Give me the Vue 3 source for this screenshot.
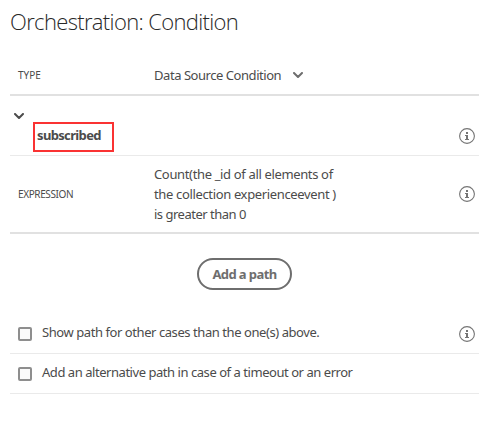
<script setup>
import { h } from 'vue'

const InfoIcon = () =>
  h('svg', { width: 16, height: 16, viewBox: '0 0 16 16', role: 'img', 'aria-label': 'Info' }, [
    h('circle', { cx: 8, cy: 8, r: 7.4, fill: 'none', stroke: '#747474', 'stroke-width': 1.1 }),
    h('path', { d: 'M7 4h2v2H7zM6 7h3v4h1v1H6v-1h1V8H6z', fill: '#747474' })
  ])

const Chevron = () =>
  h('svg', { width: 10, height: 6, viewBox: '0 0 10 6' }, [
    h('path', { d: 'M1 1l4 4 4-4', fill: 'none', stroke: 'currentColor', 'stroke-width': 2, 'stroke-linecap': 'round', 'stroke-linejoin': 'round' })
  ])

const options = [
  { label: 'Show path for other cases than the one(s) above.', info: true, cls: 'show' },
  { label: 'Add an alternative path in case of a timeout or an error', info: false, cls: 'alternative' }
]
</script>

<template>
  <main class="panel">
    <h1>Orchestration: Condition</h1>
    <section class="type">
      <span class="label type-label">TYPE</span>
      <span class="source">Data Source Condition</span>
      <Chevron class="select-arrow" />
    </section>
    <section class="path">
      <Chevron class="toggle" />
      <div class="path-row">
        <div class="name">subscribed</div>
        <InfoIcon />
      </div>
    </section>
    <section class="expression">
      <span class="label">EXPRESSION</span>
      <div class="value">
        <div>Count(the _id of all elements of</div>
        <div>the collection experienceevent )</div>
        <div class="last-line">is greater than 0</div>
      </div>
      <InfoIcon />
    </section>
    <div class="actions"><button>Add a path</button></div>
    <label v-for="o in options" :key="o.cls" class="option" :class="o.cls">
      <input type="checkbox" />
      <span class="option-text">{{ o.label }}</span>
      <InfoIcon v-if="o.info" />
    </label>
  </main>
</template>

<style>
body { background: #fff; }
</style>

<style scoped>
* { box-sizing: border-box; }
.panel {
  width: 479px;
  height: 447px;
  padding-left: 10px;
  color: #4b4b4b;
  font-family: "Noto Sans", "Open Sans", sans-serif;
  font-size: 13px;
  line-height: 20px;
  white-space: nowrap;
}
svg { display: block; flex: none; }
h1 {
  height: 56px;
  margin: 0;
  padding-top: 6px;
  color: #282828;
  font-family: "Open Sans", "Noto Sans", sans-serif;
  font-size: 22px;
  font-weight: 300;
  line-height: 30px;
  letter-spacing: -0.65px;
}
.type {
  display: flex;
  align-items: center;
  height: 40px;
  padding-left: 8px;
  border-bottom: 2px solid #e1e1e1;
}
.label { width: 136px; font-size: 10px; letter-spacing: -0.38px; }
.type-label { letter-spacing: 0; }
.source { width: 139px; letter-spacing: -0.45px; }
.select-arrow { color: #6e6e6e; }
.path { height: 60px; padding-top: 17px; border-bottom: 1px solid #eaeaea; }
.toggle { margin-left: 4px; color: #4b4b4b; }
.path-row { display: flex; justify-content: space-between; padding-right: 4px; margin-top: 3px; }
.path-row svg { margin-top: 6px; }
.name {
  width: 81px;
  height: 30px;
  margin-left: 23px;
  padding: 1px 0 0 2px;
  border: 2px solid #fa3232;
  font-weight: 700;
  letter-spacing: -0.65px;
}
.expression {
  display: flex;
  align-items: center;
  height: 78px;
  padding: 0 4px 0 8px;
  border-bottom: 2px solid #e1e1e1;
}
.value { flex: 1; letter-spacing: -0.35px; }
.last-line { letter-spacing: -0.5px; }
.actions { display: flex; justify-content: center; height: 80px; padding-top: 24px; }
button {
  width: 95px;
  height: 32px;
  padding: 0;
  border: 2px solid #6e6e6e;
  border-radius: 16px;
  background: #fff;
  color: #6e6e6e;
  font: inherit;
  font-weight: 700;
  letter-spacing: -0.6px;
}
.option {
  display: flex;
  align-items: center;
  height: 40px;
  padding: 0 4px 0 8px;
  border-bottom: 1px solid #eaeaea;
  letter-spacing: -0.43px;
}
.alternative { letter-spacing: -0.455px; }
.option-text { flex: 1; margin-top: -4px; }
input {
  appearance: none;
  width: 14px;
  height: 14px;
  margin: 1px 10px 0 0;
  border: 2px solid #8e8e8e;
  border-radius: 2px;
  background: #fafafa;
}
</style>
